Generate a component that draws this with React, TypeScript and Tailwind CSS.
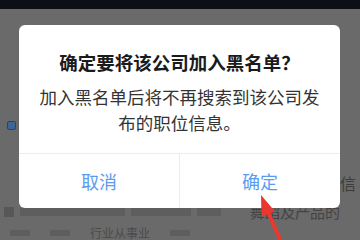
import React from "react";

const cjk = { fontFamily: '"Noto Sans CJK SC", "Noto Sans", sans-serif' };

function BackdropRows() {
  // blurred list content behind the dimmed overlay
  return (
    <div className="flex flex-col whitespace-nowrap text-[#3d3d3d]">
      <div className="h-[9px] bg-[#0d0f17]" />
      <div className="h-[104px]" />
      <div className="flex h-[24px] items-center pl-[7px]">
        <div className="h-[9px] w-[9px] rounded-[2px] border border-[#23466f] bg-[#3b6797]" />
      </div>
      <div className="h-[30px]" />
      <div className="flex h-[31px] items-center justify-end pr-[4px] text-[16px]">信</div>
      <div className="flex h-[28px] items-center gap-[6px] pl-[4px] pr-[20px] text-[15px]">
        <div className="h-[10px] w-[10px] bg-[#575757]" />
        <div className="h-[8px] w-[105px] bg-[#5e5e5e]" />
        <div className="h-[8px] w-[60px] bg-[#5e5e5e]" />
        <div className="h-[8px] w-[24px] bg-[#5e5e5e]" />
        <span className="ml-auto text-[#444]">舞蹈及产品的</span>
      </div>
      <div className="flex h-[14px] items-center gap-[20px] pl-[10px] text-[12px] leading-[14px]">
        <div className="h-[6px] w-[20px] bg-[#5e5e5e]" />
        <div className="h-[6px] w-[20px] bg-[#5e5e5e]" />
        <span className="text-[#4a4a4a]">行业从事业</span>
        <div className="h-[6px] w-[20px] bg-[#5e5e5e]" />
      </div>
    </div>
  );
}

export default function App() {
  return (
    <div className="relative h-[240px] w-[360px] overflow-hidden bg-[#6a6a6a]" style={cjk}>
      <BackdropRows />

      <div className="absolute left-[19px] top-[25px] w-[321px] overflow-hidden rounded-[6px] bg-white">
        <div className="flex flex-col items-center px-[18px] pb-[17px] pt-[25px]">
          <div className="text-[18.5px] font-bold leading-[24px] text-[#1b1b1b]">
            确定要将该公司加入黑名单？
          </div>
          <div className="mt-[10px] text-center text-[17.5px] leading-[26px] text-[#333]">
            加入黑名单后将不再搜索到该公司发
            <br />
            布的职位信息。
          </div>
        </div>
        <div className="flex h-[55px] border-t border-[#ececec]">
          <button className="flex flex-1 items-center justify-center text-[18px] text-[#5b9cf0]">
            取消
          </button>
          <div className="w-px bg-[#ececec]" />
          <button className="flex flex-1 items-center justify-center text-[18px] text-[#5b9cf0]">
            确定
          </button>
        </div>
      </div>

      <svg className="absolute left-0 top-0" width="360" height="240" viewBox="0 0 360 240">
        <path d="M268 212 L283 246" stroke="#e8382f" strokeWidth="4" strokeLinecap="round" />
        <path d="M261 195 L275 211.5 L261.5 216.5 Z" fill="#e8382f" />
      </svg>
    </div>
  );
}
